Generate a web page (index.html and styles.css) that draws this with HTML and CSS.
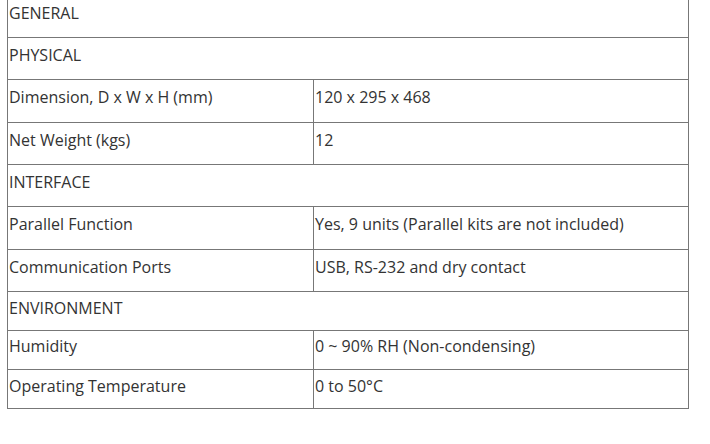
FILE: index.html
```html
<!DOCTYPE html>
<html>
<head>
<meta charset="utf-8">
<link rel="stylesheet" href="styles.css">
</head>
<body>
<table class="spec">
  <colgroup><col class="col-label"><col class="col-value"></colgroup>
  <tr class="tall"><td colspan="2">GENERAL</td></tr>
  <tr class="tall"><td colspan="2">PHYSICAL</td></tr>
  <tr class="tall tall43"><td>Dimension, D x W x H (mm)</td><td>120 x 295 x 468</td></tr>
  <tr class="tall"><td>Net Weight (kgs)</td><td>12</td></tr>
  <tr class="tall"><td colspan="2">INTERFACE</td></tr>
  <tr class="tall tall43"><td>Parallel Function</td><td>Yes, 9 units (Parallel kits are not included)</td></tr>
  <tr class="tall"><td>Communication Ports</td><td>USB, RS-232 and dry contact</td></tr>
  <tr class="short"><td colspan="2">ENVIRONMENT</td></tr>
  <tr class="short short40"><td>Humidity</td><td>0 ~ 90% RH (Non-condensing)</td></tr>
  <tr class="short"><td>Operating Temperature</td><td>0 to 50°C</td></tr>
</table>
</body>
</html>
```
FILE: styles.css
```css
html, body {
  margin: 0;
  padding: 0;
  background: #ffffff;
}
body {
  font-family: "Open Sans", "Liberation Sans", sans-serif;
  font-size: 16px;
  color: #333333;
}
.spec {
  border-collapse: collapse;
  width: 681px;
  margin: -5px 0 0 7px;
  table-layout: fixed;
}
.col-label { width: 306px; }
.col-value { width: 375px; }
.spec td {
  border: 1px solid #777777;
  padding: 7px 1px 0 1px;
  vertical-align: top;
  line-height: 20px;
}
.spec tr.tall td { height: 34px; }
.spec tr.tall43 td { height: 35px; }
.spec tr.short td { height: 32px; padding-top: 6px; }
.spec tr.short40 td { height: 33px; padding-top: 5px; }
```
